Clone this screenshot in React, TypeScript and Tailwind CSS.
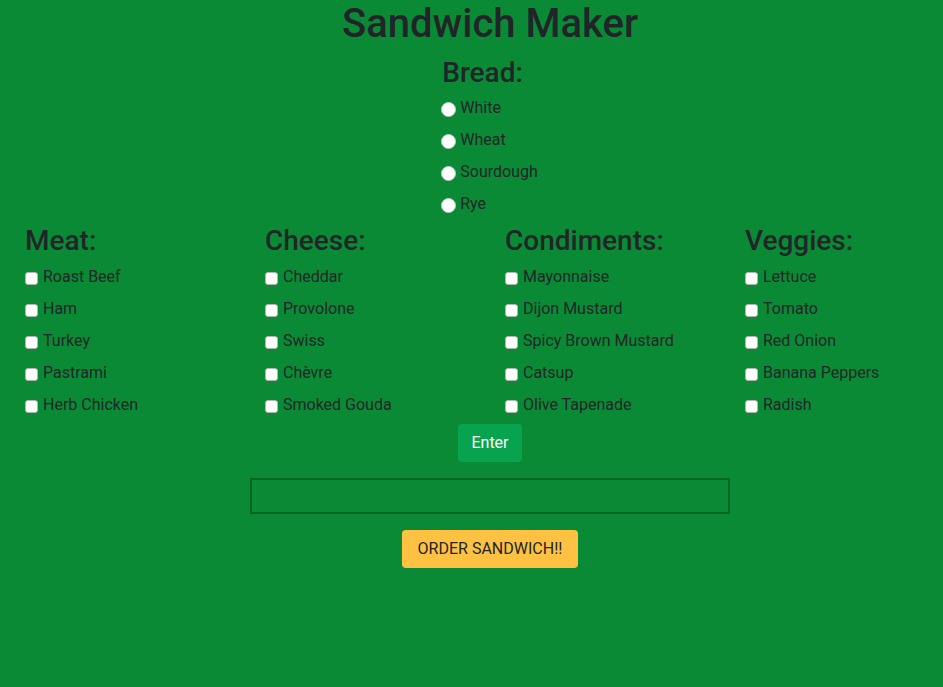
const breads = ['White', 'Wheat', 'Sourdough', 'Rye'];

const groups: { title: string; items: string[] }[] = [
  { title: 'Meat:', items: ['Roast Beef', 'Ham', 'Turkey', 'Pastrami', 'Herb Chicken'] },
  { title: 'Cheese:', items: ['Cheddar', 'Provolone', 'Swiss', 'Chèvre', 'Smoked Gouda'] },
  { title: 'Condiments:', items: ['Mayonnaise', 'Dijon Mustard', 'Spicy Brown Mustard', 'Catsup', 'Olive Tapenade'] },
  { title: 'Veggies:', items: ['Lettuce', 'Tomato', 'Red Onion', 'Banana Peppers', 'Radish'] },
];

export default function App() {
  return (
    <div className="h-[687px] overflow-hidden bg-[#0a8a35] text-[#212529] font-['Roboto',Arial,sans-serif] text-base leading-6">
      <div className="w-[960px] ml-[10px]">
        <h1 className="text-[40px] leading-[1.2] text-center font-medium">Sandwich Maker</h1>

        <div className="flex justify-center mt-2">
          <div>
            <h3 className="text-[28px] leading-[1.2] font-medium mb-[6px]">Bread:</h3>
            {breads.map((b) => (
              <label key={b} className="flex items-center h-6 mb-2">
                <input
                  type="radio"
                  name="bread"
                  className="appearance-none w-[15px] h-[15px] rounded-full bg-white border border-[#c8c8c8] mt-[3px] mr-[4px] -ml-[1px]"
                />
                {b}
              </label>
            ))}
          </div>
        </div>

        <div className="grid grid-cols-4">
          {groups.map((g) => (
            <div key={g.title} className="px-[15px]">
              <h3 className="text-[28px] leading-[1.2] font-medium mb-2">{g.title}</h3>
              {g.items.map((item) => (
                <label key={item} className="flex items-center h-6 mb-2">
                  <input
                    type="checkbox"
                    className="appearance-none w-[13px] h-[13px] rounded-[3px] bg-white border border-[#b5b5b5] mt-[3px] mr-[5px]"
                  />
                  {item}
                </label>
              ))}
            </div>
          ))}
        </div>

        <div className="flex flex-col items-center -mt-[1px]">
          <button className="h-[38px] w-[64px] rounded bg-[#08a34f] text-white">Enter</button>
          <input
            type="text"
            className="mt-4 w-[480px] h-[36px] border-2 border-[#06651f] bg-transparent outline-none px-2"
          />
          <button className="mt-4 h-[38px] w-[176px] rounded bg-[#ffc142] text-[#212529]">
            ORDER SANDWICH!!
          </button>
        </div>
      </div>
    </div>
  );
}
